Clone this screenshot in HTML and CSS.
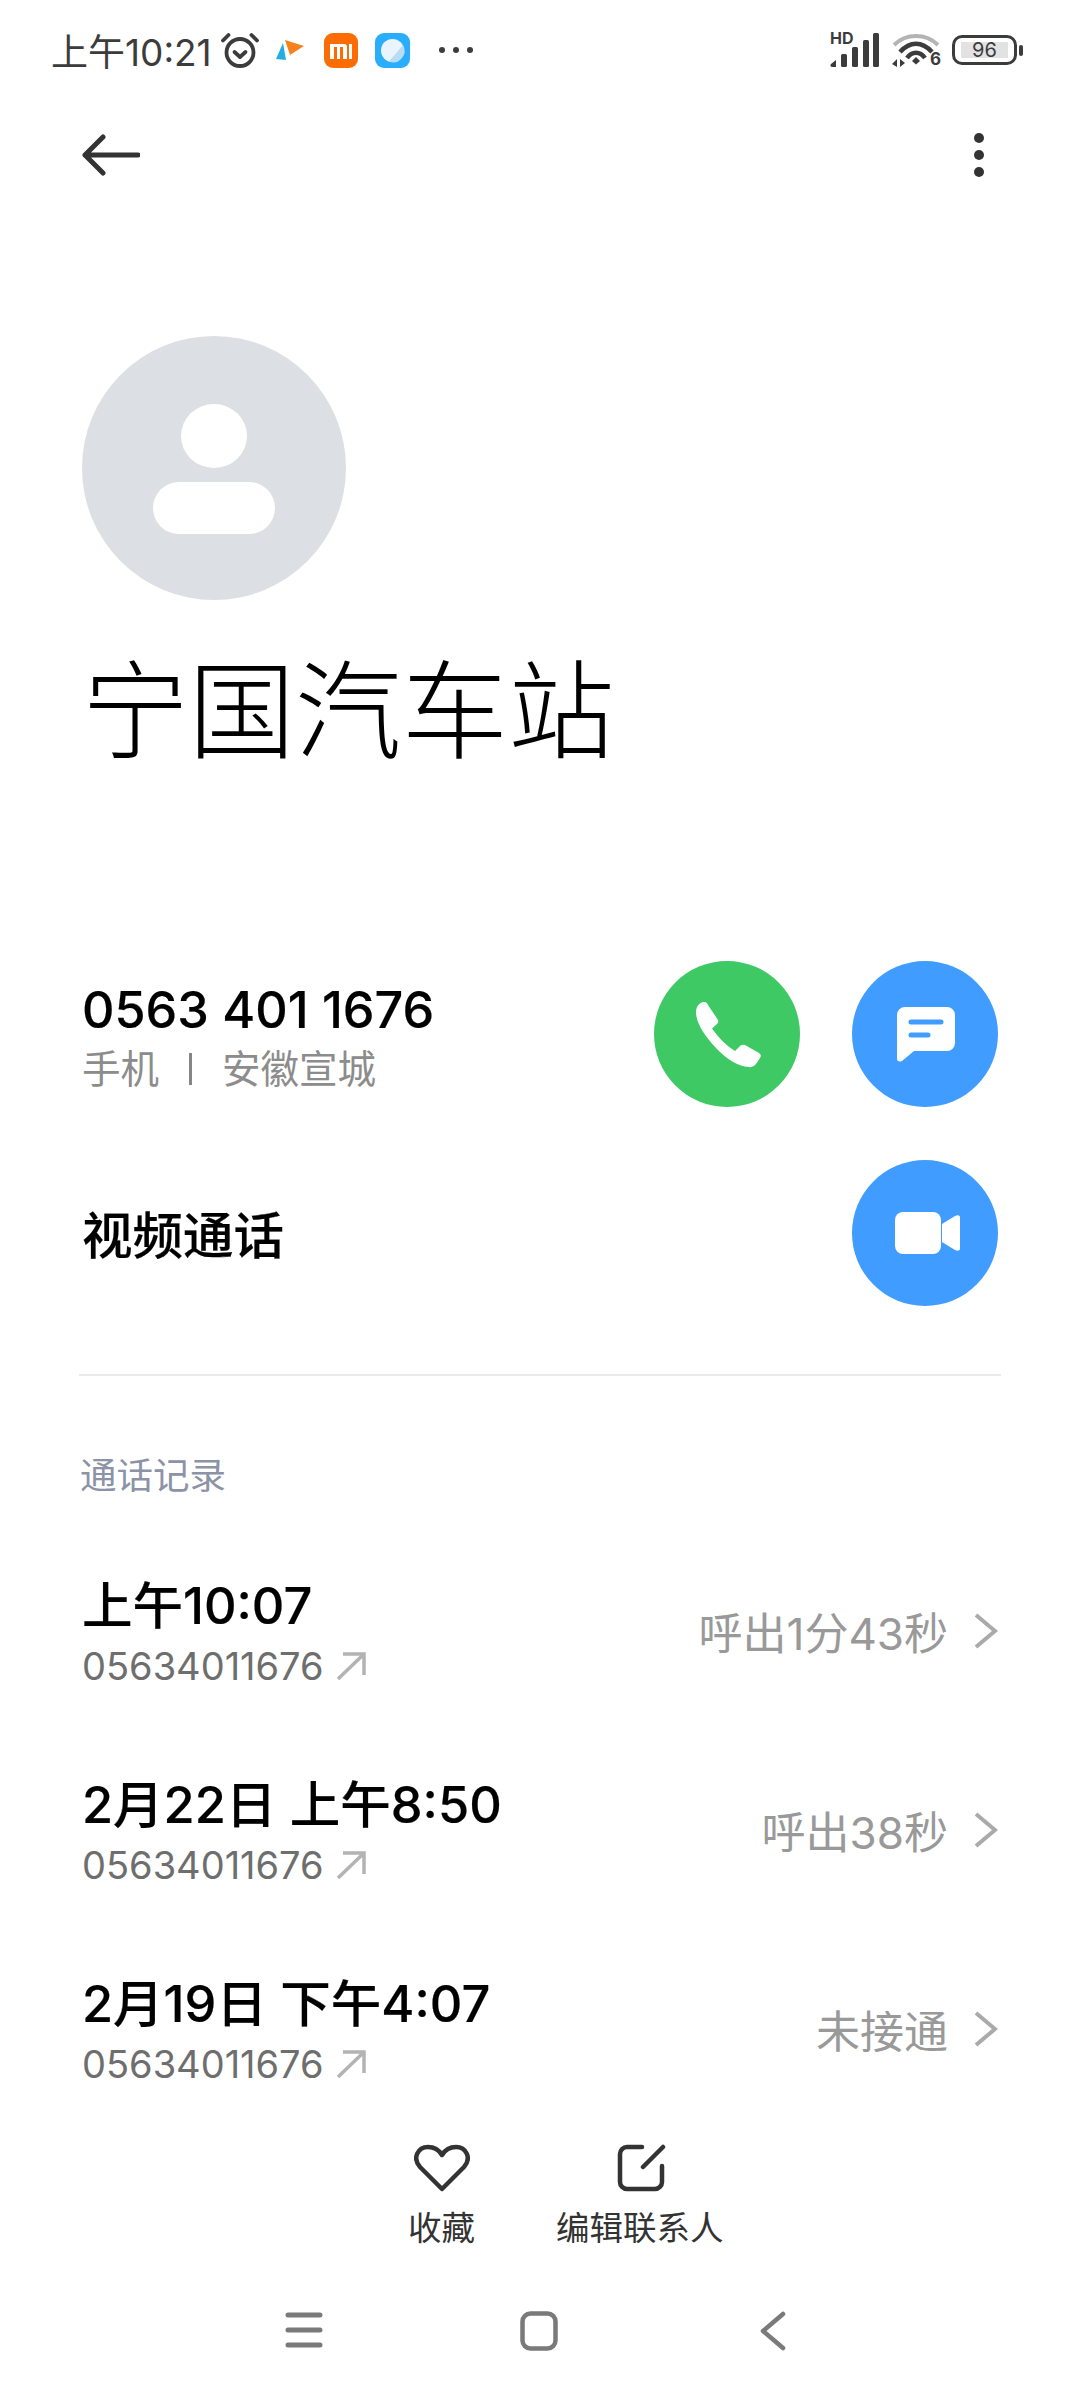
FILE: index.html
```html
<!DOCTYPE html>
<html lang="zh-CN">

<head>
  <meta charset="UTF-8">
  <meta name="viewport" content="width=device-width, initial-scale=1.0">
  <title>联系人详情</title>

  <link rel="stylesheet" href="styles.css">
</head>

<body>
  <main class="screen">
    <header class="status-bar">
      <div class="status-left">
        <span class="status-time">上午10:21</span>
        <svg class="ic-alarm" viewBox="0 0 38 36" fill="none" stroke="#3c3c3c" stroke-width="3.8" stroke-linecap="round" stroke-linejoin="round">
          <circle cx="19" cy="20.5" r="13.5"/>
          <path d="M13.5 20l5.5 5 5.5-5"/>
          <path d="M2 8.5 7.5 3M36 8.5 30.5 3"/>
        </svg>
        <svg class="ic-app-a" viewBox="0 0 28 22">
          <path d="M0 20 7 4l3 17z" fill="#22aee0"/>
          <path d="M9 1l19 6-14 9z" fill="#f5821f"/>
        </svg>
        <svg class="ic-app-b" viewBox="0 0 34 35">
          <rect width="34" height="35" rx="9" fill="#fb6c04"/>
          <path d="M6 11h14a3 3 0 0 1 3 3v12h-4V14h-3v12h-3V14H10v12H6zM25 11h3v15h-3z" fill="#fff"/>
        </svg>
        <svg class="ic-app-c" viewBox="0 0 35 35">
          <rect width="35" height="35" rx="9" fill="#2aaefc"/>
          <circle cx="17.5" cy="17.5" r="11.5" fill="#e9f4fd"/>
          <path d="M28 12a11.5 11.5 0 0 1-14 16.5z" fill="#b9dcf6"/>
        </svg>
        <div class="status-dots"><i></i><i></i><i></i></div>
      </div>
      <div class="status-right">
        <div class="signal">
          <span class="signal-hd">HD</span>
          <svg class="ic-signal" viewBox="0 0 50 36" fill="#3c3c3c">
            <path d="M2 35a2 2 0 0 1-1-3l5-4v7z"/>
            <rect x="11" y="22" width="6" height="13" rx="1.5"/>
            <rect x="22" y="15" width="6" height="20" rx="1.5"/>
            <rect x="33" y="8" width="6" height="27" rx="1.5"/>
            <rect x="43" y="1" width="6" height="34" rx="1.5"/>
          </svg>
        </div>
        <svg class="ic-wifi" viewBox="0 0 48 36" fill="none" stroke-linecap="butt">
          <path d="M2 13C14 1 34 1 46 13" stroke="#b4b4b4" stroke-width="4"/>
          <path d="M8 20C18 9 30 9 40 20" stroke="#3c3c3c" stroke-width="4.500"/>
          <path d="M15 26C20 19 28 19 33 26" stroke="#3c3c3c" stroke-width="4.500"/>
          <path d="M20 29l4-4 4 4-4 3.500z" fill="#3c3c3c"/>
          <path d="M5 35v-8l-5 5zM8 27v8l5-4z" fill="#3c3c3c"/>
        </svg>
        <span class="wifi-six">6</span>
        <div class="battery">
          <div class="battery-body"><span class="battery-level">96</span></div>
          <i class="battery-tip"></i>
        </div>
      </div>
    </header>

    <nav class="toolbar">
      <svg class="ic-back" viewBox="0 0 58 42" fill="none" stroke="#333" stroke-width="5" stroke-linecap="round" stroke-linejoin="round">
        <path d="M21 3 3 21l18 18M3 21h53"/>
      </svg>
      <div class="kebab"><i></i><i></i><i></i></div>
    </nav>

    <section class="profile">
      <div class="avatar">
        <i class="avatar-head"></i>
        <i class="avatar-body"></i>
      </div>
      <h1 class="contact-name">宁国汽车站</h1>
    </section>

    <section class="actions">
      <div class="action-row">
        <div class="action-text">
          <div class="phone-number">0563 401 1676</div>
          <div class="phone-meta">
            <span>手机</span><i class="meta-bar"></i><span>安徽宣城</span>
          </div>
        </div>
        <div class="action-btns">
          <button class="round-btn green">
            <svg class="ic-call" viewBox="0 0 67 67" fill="#fff">
              <path d="M2 6Q5 1 9 1Q12 1 13 4L23 19Q24 21 22 23L17 27.500Q27 42 40 50L45 45Q47 43 50 44L64 52Q67 54 65 57L61 63Q58 67 54 66Q38 65 21 47Q2 27 1 12Q1 8 2 6Z"/>
            </svg>
          </button>
          <button class="round-btn blue">
            <svg class="ic-msg" viewBox="0 0 58 55">
              <path d="M8 0H50a8 8 0 0 1 8 8V36a8 8 0 0 1-8 8H17L5 54Q0 56 0 51V8a8 8 0 0 1 8-8Z" fill="#fff"/>
              <path d="M14 15H44M14 28H31" stroke="#409cff" stroke-width="5" stroke-linecap="round"/>
            </svg>
          </button>
        </div>
      </div>
      <div class="action-row video-row">
        <div class="video-label">视频通话</div>
        <div class="action-btns">
          <button class="round-btn blue">
            <svg class="ic-video" viewBox="0 0 65 42" fill="#fff">
              <rect width="46" height="42" rx="8"/>
              <path d="M47 12 60 4Q65 2 65 6V36Q65 40 60 38L47 30Z"/>
            </svg>
          </button>
        </div>
      </div>
    </section>

    <section class="history">
      <h2 class="history-title">通话记录</h2>
      <ul class="call-list">
        <li class="call-row">
          <div>
            <div class="call-when">上午10:07</div>
            <div class="call-number">05634011676
              <svg class="ic-out" viewBox="0 0 30 30" fill="none" stroke="#b3b3b3" stroke-width="3.500">
                <path d="M2 28 28 3M7 3H28V24"/>
              </svg>
            </div>
          </div>
          <div class="call-state">呼出1分43秒
            <svg class="ic-chevron" viewBox="0 0 24 36" fill="none" stroke="#aaa" stroke-width="4"><path d="M2 2 21 18 2 34"/></svg>
          </div>
        </li>
        <li class="call-row">
          <div>
            <div class="call-when">2月22日 上午8:50</div>
            <div class="call-number">05634011676
              <svg class="ic-out" viewBox="0 0 30 30" fill="none" stroke="#b3b3b3" stroke-width="3.500">
                <path d="M2 28 28 3M7 3H28V24"/>
              </svg>
            </div>
          </div>
          <div class="call-state">呼出38秒
            <svg class="ic-chevron" viewBox="0 0 24 36" fill="none" stroke="#aaa" stroke-width="4"><path d="M2 2 21 18 2 34"/></svg>
          </div>
        </li>
        <li class="call-row">
          <div>
            <div class="call-when">2月19日 下午4:07</div>
            <div class="call-number">05634011676
              <svg class="ic-out" viewBox="0 0 30 30" fill="none" stroke="#b3b3b3" stroke-width="3.500">
                <path d="M2 28 28 3M7 3H28V24"/>
              </svg>
            </div>
          </div>
          <div class="call-state">未接通
            <svg class="ic-chevron" viewBox="0 0 24 36" fill="none" stroke="#aaa" stroke-width="4"><path d="M2 2 21 18 2 34"/></svg>
          </div>
        </li>
      </ul>
    </section>

    <footer class="bottom-actions">
      <div class="bottom-btn fav">
        <svg class="ic-bottom" viewBox="0 0 56 48" fill="none" stroke="#333" stroke-width="4.500" stroke-linejoin="round">
          <path d="M28 45 6 23C-2 14 4 3 14 3 20 3 25 6 28 11 31 6 36 3 42 3 52 3 58 14 50 23Z"/>
        </svg>
        <span>收藏</span>
      </div>
      <div class="bottom-btn edit">
        <svg class="ic-bottom" viewBox="0 0 56 48" fill="none" stroke="#333" stroke-width="4.500" stroke-linecap="round">
          <path d="M30 3H15a7 7 0 0 0-7 7V38a7 7 0 0 0 7 7H43a7 7 0 0 0 7-7V22M31 23 51 3"/>
        </svg>
        <span>编辑联系人</span>
      </div>
    </footer>

    <div class="nav-bar">
      <svg class="ic-menu" viewBox="0 0 38 38" fill="none" stroke="#7a7a7a" stroke-width="5" stroke-linecap="round">
        <path d="M3 4H35M3 19H35M3 34H35"/>
      </svg>
      <svg class="ic-home" viewBox="0 0 38 40" fill="none" stroke="#7a7a7a" stroke-width="4.500">
        <rect x="2.500" y="2.500" width="33" height="35" rx="8"/>
      </svg>
      <svg class="ic-nav-back" viewBox="0 0 30 40" fill="none" stroke="#7a7a7a" stroke-width="4.500" stroke-linecap="round" stroke-linejoin="round">
        <path d="M25 3 5 20l20 17"/>
      </svg>
    </div>
  </main>
</body>

</html>
```

FILE: styles.css
```css
* {
  box-sizing: border-box;
}

body {
  background: #fff;
  color: #000;
  font-family: Inter, "Noto Sans CJK SC", sans-serif;
  margin: 0;
}

h1,
h2,
ul {
  font-weight: normal;
  margin: 0;
  padding: 0;
}

li {
  list-style: none;
}

button {
  border: 0;
  padding: 0;
}

.screen {
  display: flex;
  flex-direction: column;
  height: 2400px;
  overflow: hidden;
  width: 1080px;
}

/* top status bar */
.status-bar {
  align-items: center;
  display: flex;
  flex: none;
  height: 100px;
  justify-content: space-between;
  padding: 0 57px 0 51px;
}

.status-left,
.status-right {
  align-items: center;
  display: flex;
}

.status-time {
  color: #3c3c3c;
  font-size: 37px;
  white-space: nowrap;
  width: 170px;
}

.ic-alarm {
  height: 36px;
  width: 38px;
}

.ic-app-a {
  height: 22px;
  margin-left: 17px;
  width: 28px;
}

.ic-app-b {
  height: 35px;
  margin-left: 20px;
  width: 34px;
}

.ic-app-c {
  height: 35px;
  margin-left: 17px;
  width: 35px;
}

.status-dots {
  display: flex;
  gap: 8px;
  margin-left: 29px;
}

.status-dots i {
  background: #3c3c3c;
  border-radius: 50%;
  height: 6px;
  width: 6px;
}

.signal {
  display: flex;
  height: 36px;
  position: relative;
  width: 50px;
}

.signal-hd {
  color: #3c3c3c;
  font-size: 16px;
  font-weight: 700;
  left: 0;
  line-height: 14px;
  position: absolute;
  top: -1px;
}

.ic-signal {
  height: 36px;
  width: 50px;
}

.ic-wifi {
  height: 36px;
  margin-left: 12px;
  width: 48px;
}

.wifi-six {
  color: #3c3c3c;
  font-size: 17px;
  font-weight: 700;
  margin: 17px 0 0 -10px;
  width: 10px;
}

.battery {
  align-items: center;
  display: flex;
  margin-left: 12px;
}

.battery-body {
  border: 3px solid #3c3c3c;
  border-radius: 10px;
  height: 30px;
  padding: 4px 6px;
  width: 65px;
}

.battery-level {
  align-items: center;
  background: #e2e2e2;
  color: #3c3c3c;
  display: flex;
  font-size: 20px;
  height: 16px;
  justify-content: center;
}

.battery-tip {
  background: #3c3c3c;
  border-radius: 2px;
  height: 11px;
  margin-left: 2px;
  width: 4px;
}

/* back arrow and overflow menu */
.toolbar {
  align-items: center;
  display: flex;
  flex: none;
  height: 110px;
  justify-content: space-between;
  padding: 0 96px 0 82px;
}

.ic-back {
  height: 42px;
  width: 58px;
}

.kebab {
  display: flex;
  flex-direction: column;
  gap: 7px;
}

.kebab i {
  background: #333;
  border-radius: 50%;
  height: 10px;
  width: 10px;
}

/* avatar and name */
.profile {
  flex: none;
  padding: 126px 0 0 82px;
}

.avatar {
  align-items: center;
  background: #dcdfe4;
  border-radius: 50%;
  display: flex;
  flex-direction: column;
  gap: 14px;
  height: 264px;
  padding-top: 68px;
  width: 264px;
}

.avatar-head {
  background: #fff;
  border-radius: 50%;
  height: 64px;
  width: 66px;
}

.avatar-body {
  background: #fff;
  border-radius: 26px;
  height: 52px;
  width: 122px;
}

.contact-name {
  font-size: 106.500px;
  font-weight: 300;
  height: 150px;
  line-height: 150px;
  margin-top: 37px;
  white-space: nowrap;
}

/* number and video rows */
.actions {
  flex: none;
  margin: 174px 82px 0 82px;
}

.action-row {
  align-items: center;
  display: flex;
  height: 146px;
  justify-content: space-between;
}

.video-row {
  margin-top: 53px;
}

.action-btns {
  display: flex;
  gap: 52px;
}

.round-btn {
  align-items: center;
  border-radius: 50%;
  display: flex;
  height: 146px;
  justify-content: center;
  width: 146px;
}

.green {
  background: #3ec964;
}

.blue {
  background: #409cff;
}

.ic-call {
  height: 67px;
  margin-left: 3px;
  width: 67px;
}

.ic-msg {
  height: 55px;
  margin-left: 1px;
  width: 58px;
}

.ic-video {
  height: 42px;
  margin-left: 4px;
  width: 65px;
}

.action-text {
  padding-top: 2px;
}

.phone-number {
  -webkit-text-stroke: 0.2px #000;
  font-size: 50.300px;
  font-weight: 500;
  line-height: 62px;
}

.phone-meta {
  align-items: center;
  color: #8c8c8c;
  display: flex;
  font-size: 38.500px;
  line-height: 44px;
  margin-top: 6px;
}

.meta-bar {
  background: #858585;
  height: 32px;
  margin: 0 30px;
  width: 3px;
}

.video-label {
  -webkit-text-stroke: 0.2px #000;
  font-size: 50.500px;
  font-weight: 500;
  padding-bottom: 3px;
}

/* call history */
.history {
  border-top: 2px solid #ebebeb;
  flex: 1;
  margin: 68px 79px 0;
  min-height: 0;
  overflow: hidden;
  padding: 75px 0 0 1px;
}

.history-title {
  color: #8c93a6;
  font-size: 36.500px;
  line-height: 50px;
}

.call-list {
  margin-top: 71px;
}

.call-row {
  align-items: center;
  display: flex;
  height: 128px;
  justify-content: space-between;
  margin-bottom: 71px;
  padding: 0 3px 0 2px;
}

.call-when {
  -webkit-text-stroke: 0.2px #000;
  font-size: 50.500px;
  font-weight: 500;
  line-height: 62px;
}

.call-number {
  align-items: center;
  color: #6e6e6e;
  display: flex;
  font-size: 38px;
  gap: 12px;
  height: 62px;
  margin-top: -2px;
}

.ic-out {
  height: 30px;
  width: 30px;
}

.call-state {
  align-items: center;
  color: #999;
  display: flex;
  font-size: 44px;
  gap: 26px;
  padding-bottom: 11px;
}

.ic-chevron {
  height: 36px;
  width: 24px;
}

/* favourite and edit */
.bottom-actions {
  display: flex;
  flex: none;
  gap: 81px;
  height: 156px;
  padding-left: 408px;
}

.bottom-btn {
  align-items: center;
  color: #333;
  display: flex;
  flex-direction: column;
  font-size: 33.500px;
  gap: 11px;
}

.bottom-btn span {
  line-height: 50px;
}

.ic-bottom {
  height: 48px;
  width: 56px;
}

/* system navigation */
.nav-bar {
  display: flex;
  flex: none;
  height: 100px;
  padding: 11px 0 0 285px;
}

.ic-menu {
  height: 38px;
  width: 38px;
}

.ic-home {
  height: 40px;
  margin-left: 197px;
  width: 38px;
}

.ic-nav-back {
  height: 40px;
  margin-left: 200px;
  width: 30px;
}
```
